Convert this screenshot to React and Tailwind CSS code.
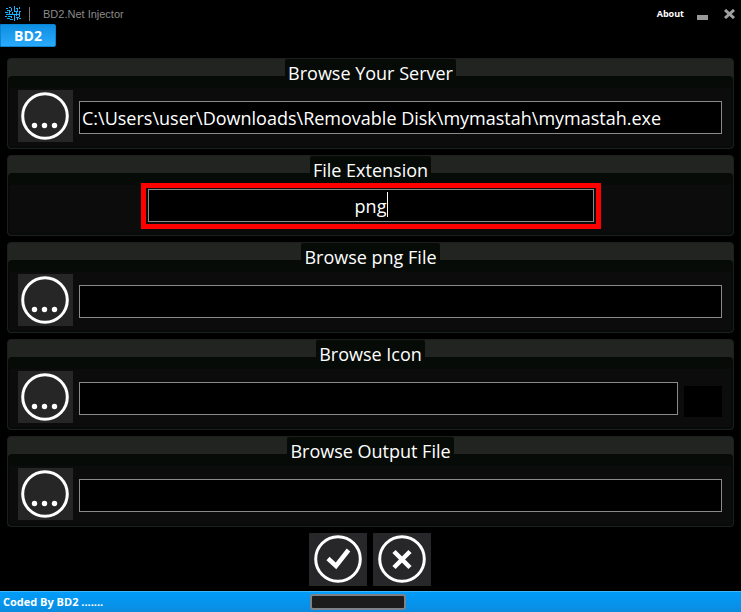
import React from 'react'

const LogoIcon = () => (
    <svg width="16" height="16" viewBox="0 0 16 16" fill="none" stroke="#16b0ff" strokeWidth="1" shapeRendering="crispEdges" aria-hidden="true">
        <path d="M1 2.500h2M4 1.500h2M6.500 2v3M2 4.500h3M0 6.500h3M4 5.500h2M4.500 6v2M1 8.500h7M7.500 6v3M0 10.500h2M3 10.500h3M6.500 10v2M2 12.500h3M5 13.500h3" />
        <path d="M9.500 0v6M11 2.500h2M12.500 3v3M14.500 1v2M10 5.500h2M14 5.500h2M8 8.500h6M11.500 6v4M14.500 6v5M9.500 9v6M11 11.500h3M12.500 12v2M14 12.500h2" />
    </svg>
)

const DotsIcon = () => (
    <svg width="55" height="52" viewBox="0 0 55 52" fill="none" aria-hidden="true">
        <circle cx="27" cy="26" r="22.300" stroke="white" strokeWidth="3" />
        <circle cx="16.500" cy="35.500" r="2.700" fill="white" />
        <circle cx="26.500" cy="35.500" r="2.700" fill="white" />
        <circle cx="36.500" cy="35.500" r="2.700" fill="white" />
    </svg>
)

const CheckIcon = () => (
    <svg width="58" height="53" viewBox="0 0 58 53" fill="none" stroke="white" aria-hidden="true">
        <circle cx="29" cy="26" r="22.300" strokeWidth="3" />
        <path d="M19 25.500l8 7.500L39.500 17" strokeWidth="4.500" />
    </svg>
)

const CrossIcon = () => (
    <svg width="58" height="53" viewBox="0 0 58 53" fill="none" stroke="white" aria-hidden="true">
        <circle cx="29" cy="26" r="22.300" strokeWidth="3" />
        <path d="M21 18.500l16 16M37 18.500l-16 16" strokeWidth="4.500" />
    </svg>
)

const Panel = ({ id, title, children }) => (
    <section className="rounded-[4px] border border-[#1c1f1d] bg-[#222422]">
        <div className="flex justify-center h-[17px]">
            <label htmlFor={id} className="z-10 h-7 px-[3px] rounded-t-[2px] bg-[#070b08] text-[18px] leading-7 whitespace-nowrap">{title}</label>
        </div>
        <div className="rounded-[4px] bg-[#060b07] px-[2px] pt-3 pb-[2px]">
            <div className="bg-[#0c0c0c]">{children}</div>
        </div>
    </section>
)

const fieldStyle = 'block h-[33px] min-w-0 bg-black border border-[#8a8a8a] px-[2px] text-[18px] text-white outline-none'

const BrowseRow = ({ id, value, preview }) => (
    <div className="flex items-end gap-[6px] pl-2 pr-[9px] pt-[2px] pb-1">
        <button type="button" aria-label="Browse" className="shrink-0 bg-[#262626]"><DotsIcon /></button>
        <input id={id} type="text" defaultValue={value} className={`${fieldStyle} flex-1 mb-2`} />
        {preview && <div className="w-[38px] h-[31px] mb-[6px] bg-black"></div>}
    </div>
)

const App = () => {
    return (
        <div className="flex flex-col min-h-screen bg-black text-white font-['Open_Sans',sans-serif]">
            <header className="flex items-center justify-between h-6 pl-[5px] pr-[6px] pt-1">
                <div className="flex items-center">
                    <LogoIcon />
                    <span className="w-px h-[14px] ml-2 mr-[13px] bg-[#777777]"></span>
                    <h1 className="font-['Liberation_Sans',sans-serif] text-[11px] leading-4 text-[#8a8a8a]">BD2.Net Injector</h1>
                </div>
                <div className="flex items-center">
                    <a href="#about" className="text-[9px] leading-4 font-bold">About</a>
                    <button type="button" aria-label="Minimize" className="flex items-end w-[11px] h-3 ml-[13px]">
                        <span className="w-full h-[5px] bg-[#999999]"></span>
                    </button>
                    <button type="button" aria-label="Close" className="ml-4">
                        <svg width="11" height="10" viewBox="0 0 11 10" stroke="#a0a0a0" strokeWidth="3" aria-hidden="true">
                            <path d="M1 1l9 8M10 1l-9 8" />
                        </svg>
                    </button>
                </div>
            </header>
            <nav className="flex h-[23px]">
                <button type="button" className="w-14 rounded-r-[2px] border border-[#0b83d0] bg-linear-to-b from-[#0c8fe2] to-[#2aaafc] text-[14px] leading-5 font-bold">BD2</button>
            </nav>
            <main className="flex flex-col flex-1 gap-[6px] pt-[11px] px-[7px] pb-[5px]">
                <Panel id="server" title="Browse Your Server">
                    <BrowseRow id="server" value="C:\Users\user\Downloads\Removable Disk\mymastah\mymastah.exe" />
                </Panel>
                <Panel id="extension" title="File Extension">
                    <div className="flex justify-center pb-1">
                        <div className="relative z-20 w-[460px] -mt-[2px] border-[5px] border-[#fe0000] px-[2px] pt-px pb-[2px]">
                            <input id="extension" type="text" defaultValue="png" className={`${fieldStyle} w-full text-center`} />
                            <span className="absolute top-1 left-1/2 ml-4 w-px h-[25px] bg-white"></span>
                        </div>
                    </div>
                </Panel>
                <Panel id="file" title="Browse png File">
                    <BrowseRow id="file" />
                </Panel>
                <Panel id="icon" title="Browse Icon">
                    <BrowseRow id="icon" preview />
                </Panel>
                <Panel id="output" title="Browse Output File">
                    <BrowseRow id="output" />
                </Panel>
                <div className="flex justify-center gap-[6px] pr-[2px]">
                    <button type="button" aria-label="Build" className="bg-[#272628]"><CheckIcon /></button>
                    <button type="button" aria-label="Cancel" className="bg-[#272628]"><CrossIcon /></button>
                </div>
            </main>
            <footer className="grid grid-cols-[1fr_auto_1fr] items-center h-[21px] px-[3px] border-t border-[#3fb6f8] bg-linear-to-b from-[#009cfa] to-[#0a8ce0]">
                <p className="text-[11px] leading-5 font-bold">Coded By BD2 .......</p>
                <div role="progressbar" aria-label="Progress" className="w-24 h-4 ml-[-26px] rounded-[3px] border-2 border-[#7e8185] bg-[#1c1c1c]"></div>
            </footer>
        </div>
    )
}

export default App
